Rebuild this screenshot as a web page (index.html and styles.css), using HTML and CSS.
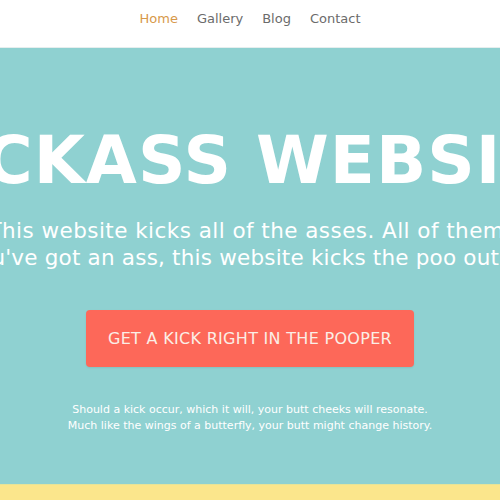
FILE: index.html
```html
<!DOCTYPE html>
<html>
<head>
<meta charset="utf-8">
<link rel="stylesheet" href="styles.css">
</head>
<body>
<nav class="nav">
  <a class="nav-link active">Home</a>
  <a class="nav-link">Gallery</a>
  <a class="nav-link">Blog</a>
  <a class="nav-link">Contact</a>
</nav>
<section class="hero">
  <h1 class="title">KICKASS WEBSITE</h1>
  <p class="lead">This website kicks all of the asses. All of them.<br><span class="lead-tight">If you've got an ass, this website kicks the poo out of it.</span></p>
  <a class="cta">GET A KICK RIGHT IN THE POOPER</a>
  <p class="note">Should a kick occur, which it will, your butt cheeks will resonate.<br>Much like the wings of a butterfly, your butt might change history.</p>
</section>
<section class="band"></section>
</body>
</html>
```
FILE: styles.css
```css
html, body {
  margin: 0;
  padding: 0;
  overflow: hidden;
  font-family: "DejaVu Sans", sans-serif;
}
.nav {
  height: 47px;
  background: #ffffff;
  display: flex;
  justify-content: center;
  align-items: center;
  gap: 19px;
  border-bottom: 1px solid #e6eeee;
}
.nav-link {
  font-size: 13px;
  color: #6b6b6b;
  padding-bottom: 14px;
  margin-top: 3px;
}
.nav-link.active {
  color: #d7994a;
}
.hero {
  background: #8fd1d1;
  height: 436px;
  display: flex;
  flex-direction: column;
  align-items: center;
  overflow: hidden;
}
.title {
  margin: 73px 0 0;
  font-size: 66px;
  line-height: 80px;
  font-weight: bold;
  color: #ffffff;
  white-space: nowrap;
  letter-spacing: 1px;
}
.lead {
  margin: 16px 0 0;
  font-size: 21.5px;
  line-height: 27px;
  letter-spacing: 0.45px;
  color: #ffffff;
  white-space: nowrap;
  text-align: center;
}
.lead-tight {
  letter-spacing: 0.2px;
}
.cta {
  margin-top: 39px;
  width: 328px;
  height: 57px;
  background: #fd6859;
  border-radius: 4px;
  color: #fbeee6;
  font-size: 16px;
  letter-spacing: 0.3px;
  display: flex;
  align-items: center;
  justify-content: center;
  box-shadow: 0 1px 2px rgba(0,0,0,0.08);
}
.note {
  margin: 35px 0 0;
  font-size: 11px;
  line-height: 16px;
  color: #ffffff;
  text-align: center;
  white-space: nowrap;
}
.band {
  height: 20px;
  background: #fbe68c;
  border-top: 1px solid #e6e498;
}
```
